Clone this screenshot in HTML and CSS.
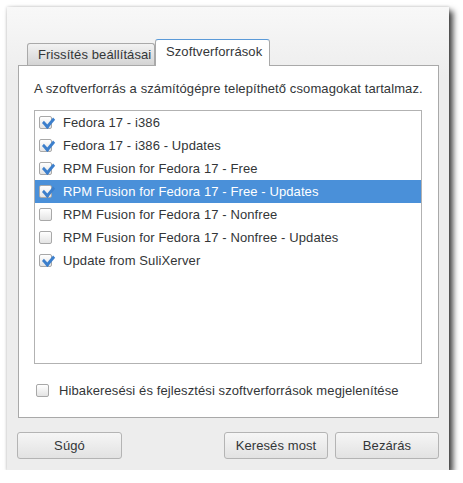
FILE: index.html
```html
<!DOCTYPE html>
<html lang="hu">
<head>
    <meta charset="UTF-8">
    <title>Szoftverforrások</title>
    <link rel="stylesheet" href="styles.css">
</head>
<body>

<div class="window">
    <div class="notebook">
        <div class="tabs">
            <div class="tab">Frissítés beállításai</div>
            <div class="tab active">Szoftverforrások</div>
        </div>
        <div class="page">
            <p class="desc">A szoftverforrás a számítógépre telepíthető csomagokat tartalmaz.</p>

            <div class="list">
                <div class="row"><span class="check on"></span>Fedora 17 - i386</div>
                <div class="row"><span class="check on"></span>Fedora 17 - i386 - Updates</div>
                <div class="row"><span class="check on"></span>RPM Fusion for Fedora 17 - Free</div>
                <div class="row selected"><span class="check on"></span>RPM Fusion for Fedora 17 - Free - Updates</div>
                <div class="row"><span class="check"></span>RPM Fusion for Fedora 17 - Nonfree</div>
                <div class="row"><span class="check"></span>RPM Fusion for Fedora 17 - Nonfree - Updates</div>
                <div class="row"><span class="check on"></span>Update from SuliXerver</div>
            </div>

            <div class="option"><span class="check"></span>Hibakeresési és fejlesztési szoftverforrások megjelenítése</div>
        </div>
    </div>

    <div class="buttons">
        <button type="button" class="help">Súgó</button>
        <span class="spacer"></span>
        <button type="button">Keresés most</button>
        <button type="button">Bezárás</button>
    </div>
</div>

</body>
</html>
```

FILE: styles.css
```css
body {
    margin: 0;
    background-color: #ffffff;
    font-family: 'Liberation Sans', Arial, sans-serif;
    font-size: 13px;
    letter-spacing: 0.1px;
    color: #333638;
}
.window {
    margin: 7px 0 0 7px;
    width: 442px;
    height: 463px;
    box-sizing: border-box;
    padding: 32px 10px 0 11px;
    background: linear-gradient(#f8f8f8, #ededed 70px, #ededed);
    box-shadow: 4px 4px 6px rgba(0, 0, 0, 0.75), 0 0 3px rgba(0, 0, 0, 0.2);
}
.tabs {
    display: flex;
    align-items: flex-end;
    padding-left: 9px;
    height: 26px;
}
.tab {
    box-sizing: border-box;
    height: 22px;
    width: 128px;
    padding-left: 10px;
    line-height: 21px;
    border: 1px solid #a9a9a9;
    border-bottom: none;
    border-radius: 3px 3px 0 0;
    background: linear-gradient(#f2f2f2, #d4d4d4);
}
.tab.active {
    height: 27px;
    width: 115px;
    margin-bottom: -1px;
    padding-left: 10px;
    line-height: 24px;
    background: #ffffff;
    border-top: 1px solid #5b9ad8;
    position: relative;
    z-index: 1;
}
.page {
    box-sizing: border-box;
    height: 353px;
    border: 1px solid #a9a9a9;
    background-color: #ffffff;
    padding: 15px 16px 0 15px;
}
.desc {
    margin: 0;
    line-height: 16px;
    white-space: nowrap;
}
.list {
    box-sizing: border-box;
    margin-top: 13px;
    height: 254px;
    border: 1px solid #b2b2b2;
    background-color: #ffffff;
}
.row {
    display: flex;
    align-items: center;
    height: 23px;
    padding-left: 4px;
    white-space: nowrap;
}
.row .check {
    margin-right: 11px;
}
.row.selected {
    background-color: #4a90d9;
    color: #ffffff;
}
.check {
    display: inline-block;
    flex-shrink: 0;
    box-sizing: border-box;
    width: 13px;
    height: 13px;
    border: 1px solid #a8a8a8;
    border-radius: 2px;
    background: linear-gradient(#ffffff, #e4e4e4);
    position: relative;
}
.check.on::after {
    content: '';
    position: absolute;
    left: 2px;
    top: 6px;
    width: 9px;
    height: 5px;
    border-left: 3px solid #3c7fcc;
    border-bottom: 3px solid #3c7fcc;
    transform: rotate(-50deg) skewX(-8deg);
    transform-origin: 0 0;
}
.option {
    display: flex;
    align-items: center;
    margin-top: 18px;
    height: 16px;
    padding-left: 2px;
    white-space: nowrap;
}
.option .check {
    margin-right: 10px;
}
.buttons {
    display: flex;
    margin-top: 14px;
    margin-left: -1px;
    gap: 7px;
}
.spacer {
    flex: 1;
}
button {
    box-sizing: border-box;
    width: 104px;
    height: 27px;
    border: 1px solid #b4b4b4;
    border-radius: 3px;
    background: linear-gradient(#f6f6f6, #e2e2e2);
    font-family: 'Liberation Sans', Arial, sans-serif;
    font-size: 13px;
    letter-spacing: 0.1px;
    color: #333638;
    padding: 0;
}
.help {
    width: 105px;
}
```
